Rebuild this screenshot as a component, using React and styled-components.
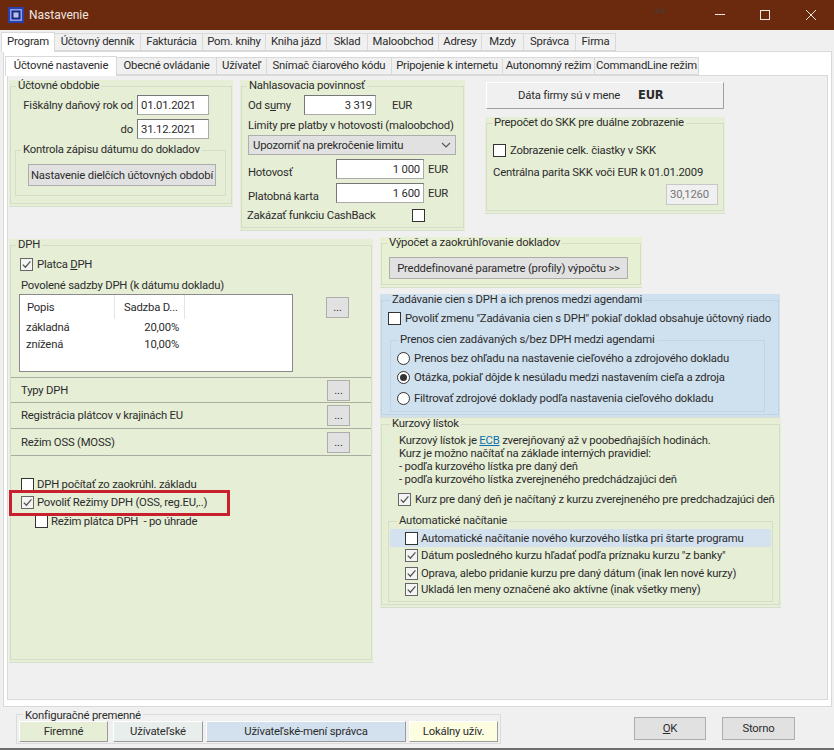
import React from "react";
import styled, { createGlobalStyle } from "styled-components";

const Global = createGlobalStyle`
  html, body { margin: 0; padding: 0; background: #f0f0f0; }
  body { font-family: Roboto, "Liberation Sans", Arial, sans-serif; font-size: 11.3px; line-height: 13px; color: #2c2c2c; letter-spacing: -0.2px; }
  * { box-sizing: border-box; }
`;

const Window = styled.div`
  width: 834px; height: 750px; overflow: hidden; display: flex; flex-direction: column;
  background: #f0f0f0; border-bottom: 2px solid #6e6e6e;
`;
const TitleBar = styled.div`
  height: 30px; flex: none; background: #6b2a0d; color: #f0e6e0; display: flex; align-items: center;
  padding-left: 8px; font-size: 12px; letter-spacing: 0;
`;
const TitleText = styled.span` margin-left: 5px; `;
const TitleControls = styled.div` margin-left: auto; display: flex; align-items: center; `;
const ResizeGlyph = styled.svg` display: block; margin-right: 49px; margin-top: -8px; `;
const Ctl = styled.svg` display: block; margin-right: ${p => p.$mr}px; `;

const TabStrip = styled.div`
  display: flex; height: 20px; flex: none; margin-top: 1px; padding-left: ${p => p.$pl}px;
  align-items: flex-end; position: relative; z-index: 1;
`;
const Tab = styled.div`
  width: ${p => p.$w}px; height: ${p => (p.$active ? p.$full : p.$full - 2)}px; flex: none; display: flex;
  align-items: center; justify-content: center; white-space: nowrap; padding-bottom: ${p => (p.$active ? 3 : 1)}px;
  background: ${p => (p.$active ? "#fff" : "#f0f0f0")};
  border: 1px solid #d9d9d9; border-bottom: ${p => (p.$active ? "none" : "1px solid #d9d9d9")};
  margin-right: -1px; position: relative; z-index: ${p => (p.$active ? 2 : 0)};
  ${p => (p.$active ? "margin-bottom: -1px;" : "")}
`;
const OuterPanel = styled.div`
  height: 656px; flex: none; margin: 0 2px 0 3px; padding: 2px 3px 6px 1px; background: #fff; border: 1px solid #d9d9d9;
  display: flex; flex-direction: column;
`;
const InnerPanel = styled.div`
  flex: 1; margin-left: 2px; background: #f0f0f0; border: 1px solid #d9d9d9; padding: 4px 0 0 1px; overflow: hidden;
`;
const TopRow = styled.div` display: flex; align-items: flex-start; height: 150px; `;
const LowerRow = styled.div` display: flex; align-items: flex-start; margin-top: 7px; `;
const RightStack = styled.div` display: flex; flex-direction: column; `;

const Group = styled.div`
  width: ${p => p.$w}px; height: ${p => p.$h}px; flex: none; background: ${p => p.$bg || "#e6eed6"};
  margin-left: ${p => p.$ml || 0}px; margin-top: ${p => p.$mt || 0}px; padding: 0 1px 2px;
  box-shadow: 0 1px 0 #d8ded0;
`;
const Frame = styled.fieldset`
  margin: 0; padding: 0; height: 100%; min-width: 0; border: 1px solid ${p => p.$line || "#d6ddc6"};
`;
const Legend = styled.legend`
  margin-left: ${p => p.$ml || 5}px; padding: 0 2px; height: 13px; line-height: ${p => p.$lh || 12}px; white-space: nowrap;
`;
const SubFrame = styled.fieldset`
  margin: ${p => p.$mt}px 0 0 ${p => p.$ml}px; padding: 0; width: ${p => p.$w}px; height: ${p => p.$h}px; min-width: 0;
  border: 1px solid ${p => p.$line || "#d6ddc6"};
`;
const Row = styled.div`
  display: flex; align-items: center; margin-top: ${p => p.$mt || 0}px; padding-left: ${p => p.$pl || 0}px; white-space: pre;
`;
const FieldLabel = styled.span`
  flex: none; width: ${p => p.$w}px; text-align: ${p => p.$align || "left"}; padding-top: ${p => p.$pt || 0}px;
`;
const Input = styled.div`
  flex: none; width: ${p => p.$w}px; height: 20px; background: #fff; border: 1px solid #7a7a7a; display: flex; align-items: center;
  justify-content: ${p => (p.$right ? "flex-end" : "flex-start")}; padding: 0 3px;
  border-color: #777 #aaa #aaa #777; margin-left: ${p => p.$ml || 0}px;
`;
const Unit = styled.span` margin-left: ${p => p.$ml}px; `;
const Plain = styled.div` margin-top: ${p => p.$mt || 0}px; padding-left: ${p => p.$pl || 0}px; white-space: nowrap; `;
const Under = styled.span` text-decoration: underline; `;
const GreyButton = styled.div`
  width: ${p => p.$w}px; height: ${p => p.$h || 22}px; margin: ${p => p.$mt || 0}px 0 0 ${p => p.$ml || 0}px; flex: none;
  align-self: ${p => (p.$start ? "flex-start" : "auto")};
  background: #e1e1e1; border: 1px solid #adadad; display: flex; align-items: center; justify-content: center; white-space: nowrap;
`;
const SelectBox = styled.div`
  width: 208px; height: 20px; margin: 3px 0 0 6px; background: #e1e1e1; border: 1px solid #adadad; display: flex;
  align-items: center; justify-content: space-between; padding: 0 4px 0 4px;
`;
const Chevron = styled.svg` display: block; `;
const CheckBox = styled.span`
  flex: none; width: 13px; height: 13px; background: #fff; border: 1px solid #333; display: block;
  margin-right: ${p => p.$mr ?? 4}px;
  ${p => (p.$checked ? "border-color: #666; background: #f4f4f4;" : "")}
`;
const CheckMark = styled.svg` display: block; `;
const RadioDot = styled.span`
  flex: none; width: 13px; height: 13px; border-radius: 50%; background: #fff; border: 1px solid #333; margin-right: 4px;
  display: flex; align-items: center; justify-content: center;
  &::after { content: ""; width: 7px; height: 7px; border-radius: 50%; background: ${p => (p.$on ? "#333" : "transparent")}; }
`;
const Check = ({ on, mr }) => (
  <CheckBox $checked={on} $mr={mr}>
    {on && (
      <CheckMark width="11" height="11" viewBox="0 0 11 11">
        <path d="M1.8 5.6 L4.4 8.2 L9.4 2.4" fill="none" stroke="#555" strokeWidth="1.3" />
      </CheckMark>
    )}
  </CheckBox>
);

const CurrencyBar = styled.div`
  width: 238px; height: 27px; margin: 2px 0 0 21px; background: #f0f0f0; border-top: 1px solid #fff; border-left: 1px solid #fff;
  border-right: 1px solid #a0a0a0; border-bottom: 1px solid #a0a0a0; display: flex; align-items: center; padding-left: 31px;
`;
const CurrencyCode = styled.b` margin-left: 18px; font-family: "DejaVu Sans", sans-serif; font-size: 11.5px; `;
const DisabledInput = styled.div`
  width: 52px; height: 21px; margin: 5px 0 0 179px; background: #f0f0f0; border: 1px solid #c8c8c8; color: #777;
  display: flex; align-items: center; padding-left: 3px;
`;

const TableWrap = styled.div`
  width: 274px; height: 78px; flex: none; margin-left: 8px; background: #fff; border: 1px solid #8a8a8a;
  display: grid; grid-template-columns: 95px 70px; grid-auto-rows: 17px; grid-template-rows: 24px 17px 17px; align-content: start;
`;
const HeadCell = styled.div`
  padding-left: ${p => p.$pl}px; display: flex; align-items: center; border-right: 1px solid #e4e4e4;
`;
const BodyCell = styled.div`
  display: flex; align-items: center; padding: 0 6px; justify-content: ${p => (p.$right ? "flex-end" : "flex-start")};
`;
const LineRow = styled.div`
  height: ${p => p.$h}px; border-top: 1px solid #a9ad9f; display: flex; align-items: center; padding-left: 10px;
  margin-top: ${p => p.$mt || 0}px; justify-content: space-between; padding-right: 21px;
`;
const Annotated = styled.div` position: relative; `;
const RedBox = styled.div`
  position: absolute; left: -2px; top: -6px; width: 221px; height: 26px; border: 3px solid #c8202c; pointer-events: none;
`;
const Tint = styled.div`
  height: 18px; margin: 1px 1px 0 1px; background: #d4e2ef; display: flex; align-items: center; padding-left: 15px; white-space: nowrap;
`;
const Link = styled.span` color: #0b6fb0; text-decoration: underline; `;

const BottomBar = styled.div` flex: 1; display: flex; align-items: flex-start; margin-top: 1px; `;
const ConfigFrame = styled.fieldset`
  margin: 0 0 0 16px; padding: 0; width: 485px; height: 36px; min-width: 0; border: 1px solid #dcdcdc;
`;
const ConfigButtons = styled.div` display: flex; margin: 0 0 0 2px; `;
const ConfigButton = styled.div`
  width: ${p => p.$w}px; height: 21px; margin-left: ${p => p.$ml}px; flex: none; background: ${p => p.$bg};
  border-top: 1px solid #fff; border-left: 1px solid #fff; border-right: 1px solid #9a9a9a; border-bottom: 1px solid #9a9a9a;
  display: flex; align-items: center; justify-content: center;
`;
const Actions = styled.div` display: flex; gap: 16px; margin: 9px 39px 0 auto; `;

const topTabs = [["Program", 54], ["Účtovný denník", 87], ["Fakturácia", 63], ["Pom. knihy", 64], ["Kniha jázd", 62], ["Sklad", 42], ["Maloobchod", 72], ["Adresy", 44], ["Mzdy", 43], ["Správca", 53], ["Firma", 41]];
const innerTabs = [["Účtovné nastavenie", 112], ["Obecné ovládanie", 101], ["Užívateľ", 51], ["Snímač čiarového kódu", 126], ["Pripojenie k internetu", 112], ["Autonomný režim", 93], ["CommandLine režim", 105]];

export default function App() {
  return (
    <Window>
      <Global />
      <TitleBar>
        <svg width="16" height="16" viewBox="0 0 16 16">
          <rect width="16" height="16" fill="#2a3fb0" />
          <rect x="2" y="2" width="12" height="12" fill="#8fa0e8" />
          <rect x="3.5" y="3.5" width="9" height="9" fill="#1d2a80" />
          <rect x="5.5" y="5.5" width="5" height="5" fill="#b8c4f0" />
        </svg>
        <TitleText>Nastavenie</TitleText>
        <TitleControls>
          <ResizeGlyph width="12" height="8" viewBox="0 0 12 8">
            <path d="M1 4 H11 M3.5 1.5 L1 4 L3.5 6.5 M8.5 1.5 L11 4 L8.5 6.5" fill="none" stroke="#4a3a30" strokeWidth="1.2" />
          </ResizeGlyph>
          <Ctl $mr={35} width="10" height="2" viewBox="0 0 10 2"><rect width="10" height="1" fill="#f0e6e0" /></Ctl>
          <Ctl $mr={36} width="10" height="10" viewBox="0 0 10 10"><rect x=".5" y=".5" width="9" height="9" fill="none" stroke="#f0e6e0" /></Ctl>
          <Ctl $mr={18} width="10" height="10" viewBox="0 0 10 10"><path d="M0 0 L10 10 M10 0 L0 10" stroke="#f0e6e0" /></Ctl>
        </TitleControls>
      </TitleBar>

      <TabStrip $pl={1}>
        {topTabs.map(([t, w], i) => <Tab key={t} $w={w} $full={20} $active={i === 0}>{t}</Tab>)}
      </TabStrip>
      <OuterPanel>
        <TabStrip $pl={0}>
          {innerTabs.map(([t, w], i) => <Tab key={t} $w={w} $full={20} $active={i === 0}>{t}</Tab>)}
        </TabStrip>
        <InnerPanel>
          <TopRow>
            <Group $w={224} $h={126}>
              <Frame>
                <Legend>Účtovné obdobie</Legend>
                <Row $mt={2}>
                  <FieldLabel $w={122} $align="right">Fiškálny daňový rok od</FieldLabel>
                  <Input $w={72} $ml={4}>01.01.2021</Input>
                </Row>
                <Row $mt={4}>
                  <FieldLabel $w={122} $align="right">do</FieldLabel>
                  <Input $w={72} $ml={4}>31.12.2021</Input>
                </Row>
                <SubFrame $mt={5} $ml={4} $w={211} $h={52}>
                  <Legend>Kontrola zápisu dátumu do dokladov</Legend>
                  <GreyButton $w={188} $mt={7} $ml={12}>Nastavenie dielčích účtovných období</GreyButton>
                </SubFrame>
              </Frame>
            </Group>
            <Group $w={225} $h={150} $ml={7}>
              <Frame>
                <Legend>Nahlasovacia povinnosť</Legend>
                <Row $mt={2} $pl={6}>
                  <FieldLabel $w={56}>Od s<Under>u</Under>my</FieldLabel>
                  <Input $w={72} $right>3 319</Input>
                  <Unit $ml={16}>EUR</Unit>
                </Row>
                <Plain $mt={4} $pl={6}>Limity pre platby v hotovosti (maloobchod)</Plain>
                <SelectBox>
                  Upozorniť na prekročenie limitu
                  <Chevron width="10" height="6" viewBox="0 0 10 6"><path d="M1 1 L5 5 L9 1" fill="none" stroke="#555" strokeWidth="1.1" /></Chevron>
                </SelectBox>
                <Row $mt={4} $pl={6}>
                  <FieldLabel $w={88} $pt={6}>Hotovosť</FieldLabel>
                  <Input $w={88} $right>1 000</Input>
                  <Unit $ml={4}>EUR</Unit>
                </Row>
                <Row $mt={4} $pl={6}>
                  <FieldLabel $w={88} $pt={6}>Platobná karta</FieldLabel>
                  <Input $w={88} $right>1 600</Input>
                  <Unit $ml={4}>EUR</Unit>
                </Row>
                <Row $mt={6} $pl={5}>
                  <FieldLabel $w={165}>Zakázať funkciu CashBack</FieldLabel>
                  <Check />
                </Row>
              </Frame>
            </Group>
            <RightStack>
              <CurrencyBar>Dáta firmy sú v mene<CurrencyCode>EUR</CurrencyCode></CurrencyBar>
              <Group $w={240} $h={96} $ml={20} $mt={8}>
                <Frame>
                  <Legend>Prepočet do SKK pre duálne zobrazenie</Legend>
                  <Row $mt={14} $pl={6}><Check />Zobrazenie celk. čiastky v SKK</Row>
                  <Plain $mt={9} $pl={6}>Centrálna parita SKK voči EUR k 01.01.2009</Plain>
                  <DisabledInput>30,1260</DisabledInput>
                </Frame>
              </Group>
            </RightStack>
          </TopRow>

          <LowerRow>
            <Group $w={364} $h={423} $mt={2}>
              <Frame>
                <Legend>DPH</Legend>
                <Row $mt={6} $pl={9}><Check on /><span>Platca <Under>D</Under>PH</span></Row>
                <Plain $mt={8} $pl={10}>Povolené sadzby DPH (k dátumu dokladu)</Plain>
                <Row $mt={2}>
                  <TableWrap>
                    <HeadCell $pl={7}>Popis</HeadCell>
                    <HeadCell $pl={9}>Sadzba D...</HeadCell>
                    <BodyCell>základná</BodyCell>
                    <BodyCell $right>20,00%</BodyCell>
                    <BodyCell>znížená</BodyCell>
                    <BodyCell $right>10,00%</BodyCell>
                  </TableWrap>
                  <GreyButton $w={23} $h={21} $ml={33} $start $mt={3}>...</GreyButton>
                </Row>
                <LineRow $h={25} $mt={5}>Typy DPH<GreyButton $w={23} $h={21}>...</GreyButton></LineRow>
                <LineRow $h={26}>Registrácia plátcov v krajinách EU<GreyButton $w={23} $h={21}>...</GreyButton></LineRow>
                <LineRow $h={27}>Režim OSS (MOSS)<GreyButton $w={23} $h={21}>...</GreyButton></LineRow>
                <LineRow $h={1} />
                <Row $mt={22} $pl={10}><Check mr={3} />DPH počítať zo zaokrúhl. základu</Row>
                <Annotated>
                  <Row $mt={5} $pl={10}><Check on mr={3} />Povoliť Režimy DPH (OSS, reg.EU,..)</Row>
                  <RedBox />
                </Annotated>
                <Row $mt={6} $pl={24}><Check mr={3} />Režim plátca DPH  - po úhrade</Row>
              </Frame>
            </Group>

            <RightStack>
              <Group $w={262} $h={50} $ml={7} $bg="#e8f0d4">
                <Frame>
                  <Legend>Výpočet a zaokrúhľovanie dokladov</Legend>
                  <GreyButton $w={239} $mt={7} $ml={7}>Preddefinované parametre (profily) výpočtu &gt;&gt;</GreyButton>
                </Frame>
              </Group>
              <Group $w={400} $h={123} $ml={7} $mt={7} $bg="#cfe0ee">
                <Frame $line="#c2d4e3">
                  <Legend $ml={8}>Zadávanie cien s DPH a ich prenos medzi agendami</Legend>
                  <Row $mt={5} $pl={6}><Check />Povoliť zmenu "Zadávania cien s DPH" pokiaľ doklad obsahuje účtovný riado</Row>
                  <SubFrame $mt={9} $ml={8} $w={375} $h={78} $line="#c2d4e3">
                    <Legend $ml={7}>Prenos cien zadávaných s/bez DPH medzi agendami</Legend>
                    <Row $mt={5} $pl={6}><RadioDot />Prenos bez ohľadu na nastavenie cieľového a zdrojového dokladu</Row>
                    <Row $mt={6} $pl={6}><RadioDot $on />Otázka, pokiaľ dôjde k nesúladu medzi nastavením cieľa a zdroja</Row>
                    <Row $mt={8} $pl={6}><RadioDot />Filtrovať zdrojové doklady podľa nastavenia cieľového dokladu</Row>
                  </SubFrame>
                </Frame>
              </Group>
              <Group $w={401} $h={189} $ml={7} $mt={1}>
                <Frame>
                  <Legend $ml={8}>Kurzový lístok</Legend>
                  <Plain $mt={3} $pl={17}>Kurzový lístok je <Link>ECB</Link> zverejňovaný až v poobedňajších hodinách.</Plain>
                  <Plain $pl={17}>Kurz je možno načítať na základe interných pravidiel:</Plain>
                  <Plain $pl={17}>- podľa kurzového lístka pre daný deň</Plain>
                  <Plain $pl={17}>- podľa kurzového lístka zverejneného predchádzajúci deň</Plain>
                  <Row $mt={7} $pl={16}><Check on />Kurz pre daný deň je načítaný z kurzu zverejneného pre predchadzajúci deň</Row>
                  <SubFrame $mt={9} $ml={6} $w={385} $h={87}>
                    <Legend $ml={8}>Automatické načítanie</Legend>
                    <Tint><Check mr={3} />Automatické načítanie nového kurzového lístka pri štarte programu</Tint>
                    <Row $mt={2} $pl={16}><Check on mr={3} />Dátum posledného kurzu hľadať podľa príznaku kurzu "z banky"</Row>
                    <Row $mt={5} $pl={16}><Check on mr={3} />Oprava, alebo pridanie kurzu pre daný dátum (inak len nové kurzy)</Row>
                    <Row $mt={3} $pl={16}><Check on mr={3} />Ukladá len meny označené ako aktívne (inak všetky meny)</Row>
                  </SubFrame>
                </Frame>
              </Group>
            </RightStack>
          </LowerRow>
        </InnerPanel>
      </OuterPanel>
      <BottomBar>
        <ConfigFrame>
          <Legend $ml={6} $lh={15}>Konfiguračné premenné</Legend>
          <ConfigButtons>
            <ConfigButton $w={89} $ml={0} $bg="#e6eed6">Firemné</ConfigButton>
            <ConfigButton $w={90} $ml={5} $bg="#e8eeec">Užívateľské</ConfigButton>
            <ConfigButton $w={200} $ml={3} $bg="#d3e1ee">Užívateľské-mení správca</ConfigButton>
            <ConfigButton $w={89} $ml={3} $bg="#fdfde0">Lokálny užív.</ConfigButton>
          </ConfigButtons>
        </ConfigFrame>
        <Actions>
          <GreyButton $w={72} $h={23}><Under>O</Under>K</GreyButton>
          <GreyButton $w={73} $h={23}>Storno</GreyButton>
        </Actions>
      </BottomBar>
    </Window>
  );
}
